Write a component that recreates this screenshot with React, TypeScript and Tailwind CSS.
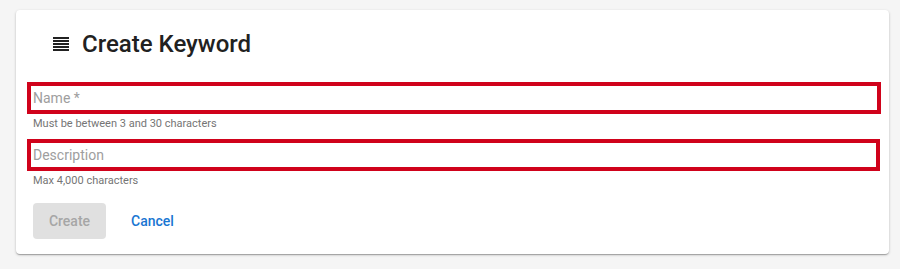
import React from "react";

export default function App() {
  return (
    <div className="min-h-[269px] bg-[#f5f5f5] pt-[10px] pl-[16px]" style={{ fontFamily: "Roboto, 'Noto Sans', sans-serif" }}>
      <div className="w-[873px] h-[244px] bg-white rounded-[4px] shadow-[0_1px_3px_rgba(0,0,0,0.2),0_1px_1px_rgba(0,0,0,0.14),0_2px_1px_-1px_rgba(0,0,0,0.12)] px-[11px]">
        <div className="pt-[22px] pl-[26px] h-[46px] flex items-center gap-[13px]">
          <svg width="16" height="14" viewBox="0 0 16 14" className="text-[#212121]">
            <rect x="0" y="0" width="16" height="2" fill="currentColor" />
            <rect x="0" y="3" width="16" height="2" fill="currentColor" />
            <rect x="0" y="6" width="16" height="2" fill="currentColor" />
            <rect x="0" y="9" width="16" height="2" fill="currentColor" />
            <rect x="0" y="12" width="16" height="2" fill="currentColor" />
          </svg>
          <h1 className="text-[24px] leading-[24px] font-medium text-[#212121]">Create Keyword</h1>
        </div>
        <div className="mt-[26px] w-[854px] h-[32px] border-[4px] border-[#d0021b] flex items-center pl-[2px]">
          <span className="text-[14px] text-[#9e9e9e]">Name *</span>
        </div>
        <div className="mt-[3px] pl-[6px] text-[11px] leading-[14px] text-[#757575]">Must be between 3 and 30 characters</div>
        <div className="mt-[8px] w-[853px] h-[32px] border-[4px] border-[#d0021b] flex items-center pl-[2px]">
          <span className="text-[14px] text-[#9e9e9e]">Description</span>
        </div>
        <div className="mt-[3px] pl-[6px] text-[11px] leading-[14px] text-[#757575]">Max 4,000 characters</div>
        <div className="mt-[15px] pl-[6px] flex items-center">
          <button className="w-[73px] h-[36px] rounded-[4px] bg-[#e0e0e0] text-[14px] font-medium text-[#a6a6a6]">Create</button>
          <button className="ml-[9px] h-[36px] px-[16px] text-[14px] font-medium text-[#1976d2]">Cancel</button>
        </div>
      </div>
    </div>
  );
}
